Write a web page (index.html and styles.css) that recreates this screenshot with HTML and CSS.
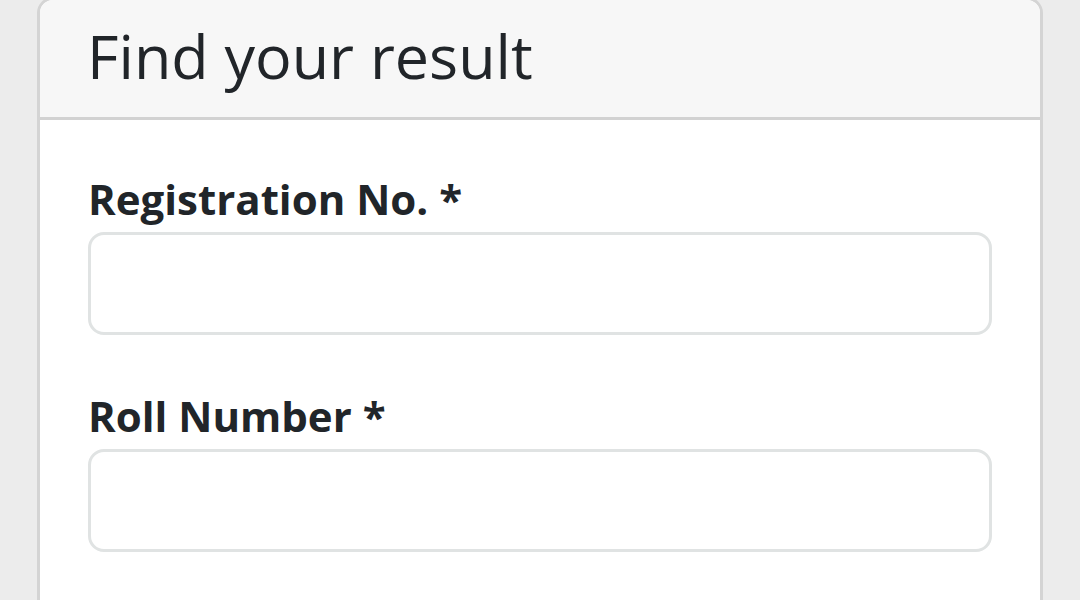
FILE: index.html
```html
<!DOCTYPE html>
<html lang="en">
<head>
<meta charset="utf-8">
<title>Find your result</title>
<link rel="stylesheet" href="styles.css">
</head>
<body>
<div class="card">
  <div class="card-header">
    <h1 class="card-title">Find your result</h1>
  </div>
  <div class="card-body">
    <div class="form-group">
      <label class="form-label" for="reg">Registration No. *</label>
      <input class="form-control" id="reg" type="text">
    </div>
    <div class="form-group">
      <label class="form-label" for="roll">Roll Number *</label>
      <input class="form-control" id="roll" type="text">
    </div>
  </div>
</div>
</body>
</html>
```

FILE: styles.css
```css
html, body {
  margin: 0;
  padding: 0;
  background: #ececec;
  font-family: "Open Sans", "Noto Sans", sans-serif;
  color: #212529;
  overflow: hidden;
}

.card {
  margin: -3px 0 0 37px;
  width: 1006px;
  box-sizing: border-box;
  border: 3px solid #d4d4d4;
  border-radius: 16px;
  background: #ffffff;
  overflow: hidden;
}

.card-header {
  background: #f7f7f7;
  border-bottom: 3px solid #d2d2d2;
  padding: 18px 47px 23px;
}

.card-title {
  margin: 0;
  font-size: 61px;
  line-height: 76px;
  font-weight: 400;
  color: #212529;
}

.card-body {
  padding: 47px 48px 48px;
}

.form-group {
  margin-bottom: 49px;
}

.form-label {
  display: block;
  font-size: 42px;
  line-height: 63px;
  font-weight: 700;
  margin-bottom: 2px;
  color: #212529;
}

.form-control {
  display: block;
  width: 100%;
  height: 103px;
  box-sizing: border-box;
  border: 3px solid #e0e3e3;
  border-radius: 16px;
  background: #fff;
  margin: 0;
  padding: 0 24px;
  font-family: inherit;
  font-size: 42px;
  outline: none;
}
```
